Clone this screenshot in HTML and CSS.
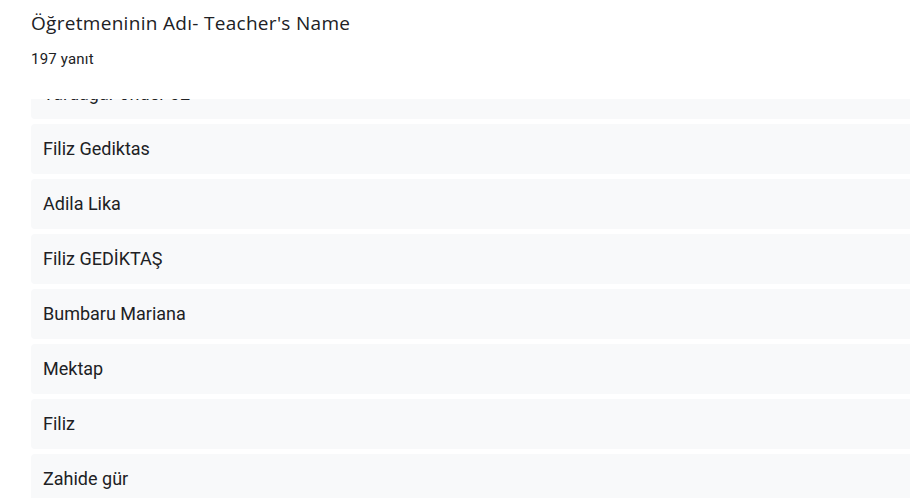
FILE: index.html
```html
<!DOCTYPE html>
<html lang="tr">
<head>
<meta charset="utf-8">
<title>Öğretmeninin Adı- Teacher's Name</title>
<link rel="stylesheet" href="styles.css">
</head>
<body>
<div class="page">
  <header class="head">
    <h1 class="title">Öğretmeninin Adı- Teacher's Name</h1>
    <div class="count">197 yanıt</div>
  </header>
  <div class="viewport">
    <ul class="list">
      <li class="item">Yardagar önder 02</li>
      <li class="item">Filiz Gediktas</li>
      <li class="item">Adila Lika</li>
      <li class="item">Filiz GEDİKTAŞ</li>
      <li class="item">Bumbaru Mariana</li>
      <li class="item">Mektap</li>
      <li class="item">Filiz</li>
      <li class="item">Zahide gür</li>
    </ul>
  </div>
</div>
</body>
</html>
```

FILE: styles.css
```css
html, body {
  margin: 0;
  padding: 0;
  background: #ffffff;
  overflow: hidden;
}
body {
  width: 910px;
  height: 498px;
  color: #202124;
  font-family: Roboto, "Noto Sans", Arial, sans-serif;
}
.page {
  padding-left: 31px;
  height: 498px;
  display: flex;
  flex-direction: column;
}
.head {
  padding-top: 11px;
  height: 99px;
  box-sizing: border-box;
  flex-shrink: 0;
}
.title {
  margin: 0;
  font-family: "Open Sans", Roboto, sans-serif;
  font-weight: 400;
  font-size: 19px;
  line-height: 24px;
  letter-spacing: 0.3px;
}
.count {
  margin-top: 14px;
  font-size: 15px;
  line-height: 20px;
  letter-spacing: 0.2px;
}
.viewport {
  flex: 1;
  overflow: hidden;
}
.list {
  list-style: none;
  margin: -30px 0 0 0;
  padding: 0;
  display: flex;
  flex-direction: column;
  gap: 5px;
}
.item {
  height: 50px;
  flex-shrink: 0;
  box-sizing: border-box;
  padding: 0 12px 2px 12px;
  display: flex;
  align-items: center;
  background: #f8f9fa;
  border-radius: 4px 0 0 4px;
  font-size: 18px;
  margin-right: -10px;
}
```
